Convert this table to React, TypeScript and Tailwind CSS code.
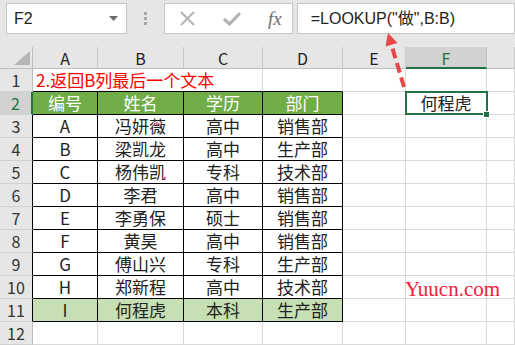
const rows = [
  ["A", "冯妍薇", "高中", "销售部"],
  ["B", "梁凯龙", "高中", "生产部"],
  ["C", "杨伟凯", "专科", "技术部"],
  ["D", "李君", "高中", "销售部"],
  ["E", "李勇保", "硕士", "销售部"],
  ["F", "黄昊", "高中", "销售部"],
  ["G", "傅山兴", "专科", "生产部"],
  ["H", "郑新程", "高中", "技术部"],
  ["I", "何程虎", "本科", "生产部"],
];

function TopBar() {
  return (
    <div className="h-[47px] bg-[#e6e6e6] flex items-start pt-[3px] pl-[6px]">
      {/* name box */}
      <div className="w-[127px] h-[31px] bg-white border border-[#c6c6c6] flex items-center justify-between pl-[7px] pr-[8px] text-[16px] text-[#222] font-['Liberation_Sans',sans-serif]">
        <span>F2</span>
        <svg width="9" height="5" viewBox="0 0 9 5">
          <path d="M0 0 L9 0 L4.5 5 Z" fill="#6b6b6b" />
        </svg>
      </div>

      <div className="ml-[17px] mt-[9px] flex flex-col gap-[2px]">
        <div className="w-[3px] h-[3px] bg-[#a6a6a6]" />
        <div className="w-[3px] h-[3px] bg-[#a6a6a6]" />
        <div className="w-[3px] h-[3px] bg-[#a6a6a6]" />
      </div>

      {/* cancel / enter / fx */}
      <div className="ml-[17px] w-[136px] h-[31px] bg-white border border-[#c6c6c6] flex items-center">
        <svg className="ml-[15px]" width="15" height="15" viewBox="0 0 15 15">
          <path d="M1 1 L14 14 M14 1 L1 14" stroke="#b4b4b4" strokeWidth="2" />
        </svg>
        <svg className="ml-[28px]" width="18" height="15" viewBox="0 0 18 15">
          <path d="M1 8 L6.5 13 L17 2" stroke="#b4b4b4" strokeWidth="3.2" fill="none" />
        </svg>
        <span className="ml-[27px] text-[19px] italic text-[#6e6e6e] font-['Liberation_Serif',serif] leading-none">
          fx
        </span>
      </div>

      {/* formula input */}
      <div className="ml-[4px] w-[230px] h-[31px] bg-white border border-[#c6c6c6] flex items-center pl-[13px] text-[16px] text-[#222] font-['Liberation_Sans','Noto_Sans_CJK_SC',sans-serif] whitespace-nowrap">
        =LOOKUP("做",B:B)
      </div>
    </div>
  );
}

function ColHeader({ label, selected }: { label: string; selected?: boolean }) {
  return (
    <div
      className={
        selected
          ? "flex items-center justify-center bg-[#d2d2d2] border-r border-r-[#c0c0c0] border-b-2 border-b-[#217346] text-[16px] text-[#217346] pt-[2px]"
          : "flex items-center justify-center bg-[#e6e6e6] border-r border-r-[#c8c8c8] border-b border-b-[#bdbdbd] text-[16px] text-[#222]"
      }
    >
      {label}
    </div>
  );
}

function RowHeader({ n }: { n: number }) {
  let cls =
    "flex items-center justify-center bg-[#e6e6e6] border-b border-b-[#d0d0d0] border-r border-r-[#bdbdbd] text-[16px] text-[#333]";
  if (n === 2)
    cls =
      "flex items-center justify-center bg-[#d2d2d2] border-b border-b-[#d0d0d0] border-r-2 border-r-[#217346] text-[16px] text-[#217346]";
  else if (n > 2 && n < 12)
    cls =
      "flex items-center justify-center bg-[#e6e6e6] border-b border-b-[#d0d0d0] border-r border-r-black text-[16px] text-[#333]";
  return <div className={cls}>{n}</div>;
}

const plain = "flex items-center justify-center border-r border-b border-[#d9d9d9]";
const tbl = "flex items-center justify-center border-r border-b border-black text-[17px]";

function DataRow({ n, cells, head, last }: { n: number; cells: string[]; head?: boolean; last?: boolean }) {
  const bg = head ? "bg-[#70ad47] text-white" : last ? "bg-[#c6e0b4] text-[#222]" : "bg-white text-[#222]";
  return (
    <>
      <RowHeader n={n} />
      {cells.map((c, i) => (
        <div key={i} className={tbl + " " + bg}>
          {c}
        </div>
      ))}
      <div className={plain} />
      {n === 2 ? (
        <div className={plain + " relative text-[17px] text-[#222]"}>
          何程虎
          <div className="absolute -left-[1px] -top-[1px] w-[83px] h-[24px] border-2 border-[#217346]" />
          <div className="absolute -right-[4px] -bottom-[4px] w-[7px] h-[7px] bg-[#217346] border border-white" />
        </div>
      ) : (
        <div className={plain} />
      )}
      <div className={plain} />
    </>
  );
}

function Sheet() {
  return (
    <div className="grid grid-cols-[33px_65px_86px_79px_80px_63px_81px_28px] grid-rows-[22px_repeat(12,23px)]">
      {/* corner */}
      <div className="relative bg-[#e6e6e6] border-r border-r-[#bdbdbd] border-b border-b-[#bdbdbd]">
        <svg className="absolute right-[2px] bottom-[3px]" width="16" height="14" viewBox="0 0 16 14">
          <path d="M16 0 L16 14 L0 14 Z" fill="#b6b6b6" />
        </svg>
      </div>
      {["A", "B", "C", "D", "E"].map((l) => (
        <ColHeader key={l} label={l} />
      ))}
      <ColHeader label="F" selected />
      <ColHeader label="" />

      {/* row 1 */}
      <RowHeader n={1} />
      <div className="col-span-3 flex items-center pl-[3px] border-r border-r-[#d9d9d9] border-b border-b-black text-[17px] text-[#ff0000] whitespace-nowrap">
        2.返回B列最后一个文本
      </div>
      <div className="border-r border-r-[#d9d9d9] border-b border-b-black" />
      <div className={plain} />
      <div className={plain} />
      <div className={plain} />

      <DataRow n={2} cells={["编号", "姓名", "学历", "部门"]} head />
      {rows.map((r, i) => (
        <DataRow key={i} n={i + 3} cells={r} last={i === rows.length - 1} />
      ))}

      {/* row 12 */}
      <RowHeader n={12} />
      {[0, 1, 2, 3, 4, 5, 6].map((i) => (
        <div key={i} className={plain} />
      ))}
    </div>
  );
}

export default function App() {
  return (
    <div className="relative w-[515px] h-[345px] overflow-hidden bg-white font-['Noto_Sans_CJK_SC',sans-serif]">
      <TopBar />
      <Sheet />
      <svg className="absolute left-0 top-0 pointer-events-none" width="515" height="345" viewBox="0 0 515 345">
        <line x1="404" y1="87" x2="391.5" y2="45" stroke="#e8474a" strokeWidth="4" strokeDasharray="10 5" />
        <path d="M388 33 L397.5 43 L385.5 46.5 Z" fill="#e8474a" />
      </svg>
      <div className="absolute left-[405px] top-[279px] text-[21px] leading-[21px] text-[#f0203a] font-['Liberation_Serif',serif] whitespace-nowrap">
        Yuucn.com
      </div>
    </div>
  );
}
